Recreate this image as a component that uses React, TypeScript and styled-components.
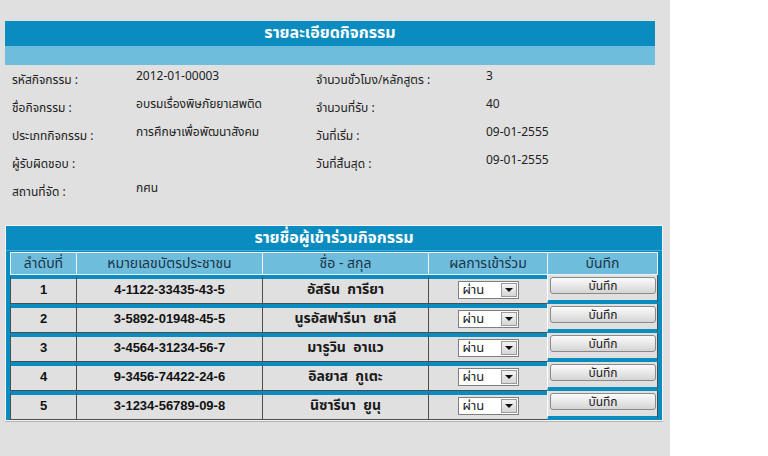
import React from "react";
import styled, { createGlobalStyle } from "styled-components";

const GlobalStyle = createGlobalStyle`
  html, body { margin: 0; padding: 0; background: #ffffff; }
  body { font-family: Tahoma, "Noto Sans Thai", "DejaVu Sans", "Noto Sans", sans-serif; }
  * { box-sizing: border-box; }
`;

const BLUE = "#0a8cc0";
const LIGHT_BLUE = "#6fbddc";
const GRAY = "#e0e0e0";

const Page = styled.div`
  width: 670px;
  min-height: 456px;
  background: ${GRAY};
  padding: 21px 0 0 5px;
`;

const DetailHeader = styled.div`
  width: 650px;
  height: 25px;
  line-height: 25px;
  background: ${BLUE};
  color: #ffffff;
  font-size: 16px;
  font-weight: bold;
  text-align: center;
`;

const SubBar = styled.div`
  width: 650px;
  height: 19px;
  background: ${LIGHT_BLUE};
`;

const InfoGrid = styled.div`
  display: grid;
  grid-template-columns: 124px 180px 170px 150px;
  grid-auto-rows: 28px;
  margin: 1px 0 0 7px;
  color: #222222;
  font-size: 12px;
`;

const Label = styled.div`
  align-self: center;
  line-height: 16px;
  white-space: nowrap;
`;

const Value = styled.div`
  align-self: start;
  padding-top: 2px;
  line-height: 16px;
  white-space: nowrap;
`;

const ListPanel = styled.div`
  width: 658px;
  margin-top: 19px;
  background: ${BLUE};
  border: 1px solid #f4f4f4;
  box-shadow: 0 1px 0 #b4b4b4;
`;

const ListTitle = styled.div`
  height: 25px;
  line-height: 25px;
  color: #ffffff;
  font-size: 16px;
  font-weight: bold;
  text-align: center;
  border-bottom: 1px solid #4aa9d0;
`;

const Table = styled.table`
  width: 648px;
  margin: 1px 4px 0 4px;
  border-collapse: separate;
  border-spacing: 0;
  table-layout: fixed;
`;

const HeadCell = styled.th<{ $w: number }>`
  width: ${(p) => p.$w}px;
  height: 22px;
  padding: 0;
  background: ${LIGHT_BLUE};
  border: 1px solid #eaf5fa;
  border-right-width: 0;
  color: #1b3446;
  font-size: 14px;
  font-weight: normal;
  text-align: center;
  &:last-child { border-right-width: 1px; }
`;

const DataCell = styled.td<{ $bold?: boolean }>`
  height: 29px;
  padding: 0 0 3px;
  background: ${GRAY};
  border-top: 4px solid ${BLUE};
  border-left: 1px solid #4d4d4d;
  border-bottom: 1px solid #4d4d4d;
  color: #111111;
  font-family: ${(p) => (p.$bold ? `"Liberation Sans", Arial, Tahoma, "Noto Sans Thai", sans-serif` : "inherit")};
  font-size: 13px;
  font-weight: ${(p) => (p.$bold ? "bold" : "normal")};
  text-align: center;
  vertical-align: middle;
`;

const NameCell = styled(DataCell)`
  font-weight: bold;
  font-size: 14px;
  color: #1a1a1a;
  white-space: pre;
`;

const ButtonCell = styled.td`
  height: 29px;
  padding: 2px 1px 0 2px;
  background: ${GRAY};
  border-left: 1px solid #ffffff;
  border-right: 1px solid #4d4d4d;
  border-bottom: 4px solid ${BLUE};
  vertical-align: top;
`;

const Select = styled.div`
  display: inline-flex;
  align-items: stretch;
  vertical-align: middle;
  width: 61px;
  height: 18px;
  background: #ffffff;
  border: 1px solid #7f7f7f;
  text-align: left;
  font-family: Tahoma, "Noto Sans Thai", sans-serif;
  font-weight: normal;
  font-size: 13px;
  color: #222222;
`;

const SelectText = styled.span`
  flex: 1;
  padding-left: 4px;
  line-height: 16px;
`;

const SelectArrow = styled.span`
  width: 16px;
  margin: 1px;
  background: linear-gradient(#f4f4f4, #d6d6d6);
  border: 1px solid #9a9a9a;
  display: flex;
  align-items: center;
  justify-content: center;
  &::after {
    content: "";
    border-left: 4px solid transparent;
    border-right: 4px solid transparent;
    border-top: 4px solid #111111;
  }
`;

const SaveButton = styled.button`
  display: block;
  width: 100%;
  height: 17px;
  padding: 2px 0 0;
  overflow: hidden;
  border: 1px solid #8a8a8a;
  border-radius: 3px;
  background: linear-gradient(#fbfbfb, #e4e4e4 60%, #d4d4d4);
  color: #222222;
  font-family: Tahoma, "Noto Sans Thai", sans-serif;
  font-size: 12px;
  line-height: 13px;
  text-align: center;
`;

const rows = [
  { no: 1, id: "4-1122-33435-43-5", name: "อัสริน  การียา" },
  { no: 2, id: "3-5892-01948-45-5", name: "นูรอัสฟารีนา  ยาลี" },
  { no: 3, id: "3-4564-31234-56-7", name: "มารูวิน  อาแว" },
  { no: 4, id: "9-3456-74422-24-6", name: "อิลยาส  กูเตะ" },
  { no: 5, id: "3-1234-56789-09-8", name: "นิซารีนา  ยูนุ" },
];

const info: [string, string, string, string][] = [
  ["รหัสกิจกรรม :", "2012-01-00003", "จำนวนชั่วโมง/หลักสูตร :", "3"],
  ["ชื่อกิจกรรม :", "อบรมเรื่องพิษภัยยาเสพติด", "จำนวนที่รับ :", "40"],
  ["ประเภทกิจกรรม :", "การศึกษาเพื่อพัฒนาสังคม", "วันที่เริ่ม :", "09-01-2555"],
  ["ผู้รับผิดชอบ :", "", "วันที่สิ้นสุด :", "09-01-2555"],
  ["สถานที่จัด :", "กศน", "", ""],
];

export default function App() {
  return (
    <>
      <GlobalStyle />
      <Page>
        <DetailHeader>รายละเอียดกิจกรรม</DetailHeader>
        <SubBar />
        <InfoGrid>
          {info.map(([l1, v1, l2, v2], i) => (
            <React.Fragment key={i}>
              <Label>{l1}</Label>
              <Value>{v1}</Value>
              <Label>{l2}</Label>
              <Value>{v2}</Value>
            </React.Fragment>
          ))}
        </InfoGrid>
        <ListPanel>
          <ListTitle>รายชื่อผู้เข้าร่วมกิจกรรม</ListTitle>
          <Table>
            <thead>
              <tr>
                <HeadCell $w={66}>ลำดับที่</HeadCell>
                <HeadCell $w={186}>หมายเลขบัตรประชาชน</HeadCell>
                <HeadCell $w={166}>ชื่อ - สกุล</HeadCell>
                <HeadCell $w={119}>ผลการเข้าร่วม</HeadCell>
                <HeadCell $w={111}>บันทึก</HeadCell>
              </tr>
            </thead>
            <tbody>
              {rows.map((r) => (
                <tr key={r.no}>
                  <DataCell $bold>{r.no}</DataCell>
                  <DataCell $bold>{r.id}</DataCell>
                  <NameCell>{r.name}</NameCell>
                  <DataCell>
                    <Select>
                      <SelectText>ผ่าน</SelectText>
                      <SelectArrow />
                    </Select>
                  </DataCell>
                  <ButtonCell>
                    <SaveButton type="button">บันทึก</SaveButton>
                  </ButtonCell>
                </tr>
              ))}
            </tbody>
          </Table>
        </ListPanel>
      </Page>
    </>
  );
}
